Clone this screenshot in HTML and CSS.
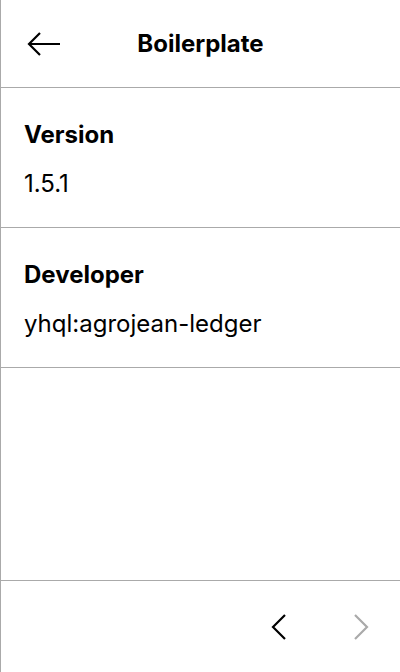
FILE: index.html
```html
<!DOCTYPE html>
<html>
<head>
<meta charset="utf-8">
<link rel="stylesheet" href="styles.css">
</head>
<body>
<div class="screen">
  <header class="header">
    <button class="back" aria-label="Back">
      <svg width="34" height="26" viewBox="0 0 34 26"><path d="M2 13 H33 M13 2 L2 13 L13 24" fill="none" stroke="#000" stroke-width="2.2" stroke-linejoin="miter"/></svg>
    </button>
    <h1 class="title">Boilerplate</h1>
  </header>
  <section class="row">
    <div class="label">Version</div>
    <div class="value">1.5.1</div>
  </section>
  <section class="row">
    <div class="label">Developer</div>
    <div class="value">yhql:agrojean-ledger</div>
  </section>
  <div class="spacer"></div>
  <footer class="footer">
    <button class="nav" aria-label="Previous">
      <svg width="16" height="26" viewBox="0 0 16 26"><path d="M14 1 L2 13 L14 25" fill="none" stroke="#000" stroke-width="2.2"/></svg>
    </button>
    <button class="nav disabled" aria-label="Next">
      <svg width="16" height="26" viewBox="0 0 16 26"><path d="M2 1 L14 13 L2 25" fill="none" stroke="#aaa" stroke-width="2.2"/></svg>
    </button>
  </footer>
</div>
</body>
</html>
```
FILE: styles.css
```css
* { box-sizing: border-box; }
html, body { margin: 0; padding: 0; background: #fff; }
body { font-family: Inter, "Noto Sans", sans-serif; color: #000; }
.screen {
  width: 400px;
  height: 672px;
  border-left: 1px solid #aaa;
  display: flex;
  flex-direction: column;
}
.header {
  position: relative;
  height: 88px;
  border-bottom: 1px solid #aaa;
  display: flex;
  align-items: center;
  justify-content: center;
}
.back {
  position: absolute;
  left: 26px;
  top: 31px;
  padding: 0;
  border: 0;
  background: none;
  display: flex;
}
.title {
  margin: 0;
  font-size: 24px;
  font-weight: 700;
  line-height: 28px;
}
.row {
  height: 140px;
  border-bottom: 1px solid #aaa;
  padding: 33px 0 0 23px;
}
.label {
  font-size: 24px;
  font-weight: 700;
  line-height: 28px;
}
.value {
  margin-top: 21px;
  font-size: 24px;
  line-height: 28px;
}
.spacer { flex: 1; }
.footer {
  height: 92px;
  border-top: 1px solid #aaa;
  display: flex;
  justify-content: flex-end;
  align-items: center;
  gap: 34px;
  padding-right: 15px;
}
.nav {
  width: 48px;
  height: 48px;
  padding: 0;
  border: 0;
  background: none;
  display: flex;
  align-items: center;
  justify-content: center;
}
```
